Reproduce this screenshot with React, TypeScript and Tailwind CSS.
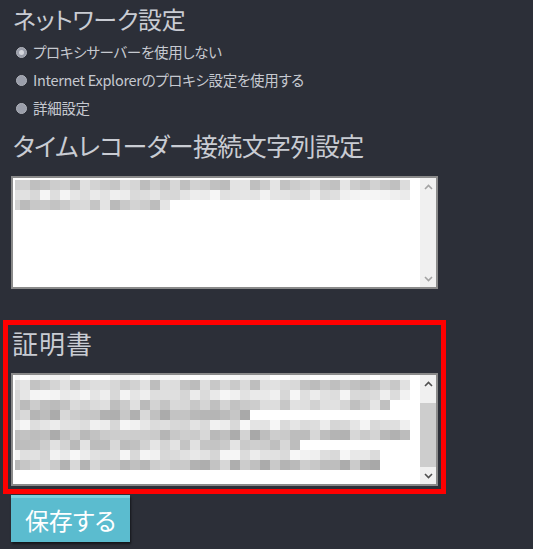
import React from "react";

type Row = { h: number; w: number; tone: "mid" | "light" | "dark" | "sparse" };

const firstRows: Row[] = [
  { h: 10, w: 400, tone: "mid" },
  { h: 10, w: 400, tone: "light" },
  { h: 10, w: 155, tone: "mid" },
];

const certRows: Row[] = [
  { h: 5, w: 395, tone: "sparse" },
  { h: 10, w: 395, tone: "mid" },
  { h: 10, w: 395, tone: "light" },
  { h: 10, w: 375, tone: "mid" },
  { h: 10, w: 240, tone: "dark" },
  { h: 10, w: 395, tone: "light" },
  { h: 10, w: 400, tone: "dark" },
  { h: 10, w: 285, tone: "mid" },
  { h: 10, w: 365, tone: "light" },
  { h: 10, w: 365, tone: "dark" },
];

function makeRandom(seed: number) {
  let s = seed;
  return () => {
    s = (s * 9301 + 49297) % 233280;
    return s / 233280;
  };
}

function shade(tone: Row["tone"], r: number) {
  if (tone === "sparse") return r > 0.55 ? 255 : 238 + Math.floor(r * 20);
  if (tone === "light") return 214 + Math.floor(r * 34);
  if (tone === "dark") return 168 + Math.floor(r * 50);
  return 186 + Math.floor(r * 44);
}

// blurred (mosaic) contents of a text box
function Mosaic({ rows, seed }: { rows: Row[]; seed: number }) {
  const rand = makeRandom(seed);
  return (
    <div className="flex flex-col">
      {rows.map((row, i) => {
        const cells: number[] = [5];
        let total = 5;
        while (total + 10 <= row.w) {
          cells.push(10);
          total += 10;
        }
        return (
          <div key={i} className="flex" style={{ height: row.h }}>
            {cells.map((cw, j) => {
              const g = shade(row.tone, rand());
              return (
                <div
                  key={j}
                  className="shrink-0"
                  style={{ width: cw, background: `rgb(${g},${g},${g})` }}
                />
              );
            })}
          </div>
        );
      })}
    </div>
  );
}

function Chevron({ up, dark }: { up?: boolean; dark?: boolean }) {
  return (
    <svg width="9" height="6" viewBox="0 0 9 6" className={up ? "" : "rotate-180"}>
      <path
        d="M1 5 L4.5 1.5 L8 5"
        fill="none"
        stroke={dark ? "#505050" : "#a3a3a3"}
        strokeWidth="1.6"
      />
    </svg>
  );
}

function TextBox({ rows, seed, thumb }: { rows: Row[]; seed: number; thumb?: boolean }) {
  return (
    <div className="flex h-[113px] w-[427px] border-2 border-[#8a8a8a] bg-white">
      <div
        className={
          thumb
            ? "min-w-0 flex-1 overflow-hidden pl-[2px] pt-0"
            : "min-w-0 flex-1 overflow-hidden pl-[2px] pt-[2px]"
        }
      >
        <Mosaic rows={rows} seed={seed} />
      </div>
      <div className="flex w-[16px] shrink-0 flex-col bg-[#f0f0f0]">
        <div className="flex h-[17px] items-center justify-center">
          <Chevron up dark={thumb} />
        </div>
        <div className="flex flex-1 flex-col justify-end">
          {thumb && <div className="h-[64px] bg-[#cdcdcd]" />}
        </div>
        <div className="flex h-[17px] items-center justify-center">
          <Chevron dark={thumb} />
        </div>
      </div>
    </div>
  );
}

function Radio({ label, checked }: { label: string; checked?: boolean }) {
  return (
    <div className="flex h-[28px] items-center">
      <span className="ml-[5px] flex h-[11px] w-[11px] items-center justify-center rounded-full border border-[#b0b3bb] bg-[#9a9eaa]">
        {checked && <span className="h-[5px] w-[5px] rounded-full bg-[#d4d6dc]" />}
      </span>
      <span className="ml-[6px] text-[14.5px] leading-[20px] tracking-[-0.3px] text-[#c6c9d0]">
        {label}
      </span>
    </div>
  );
}

export default function App() {
  return (
    <div
      className="min-h-screen bg-[#2c2f38] pl-[11px] pt-[4px] [font-feature-settings:'palt']"
      style={{ fontFamily: "'Noto Sans CJK JP', 'Noto Sans', sans-serif" }}
    >
      <h1 className="pl-[2px] text-[24px] leading-[30px] tracking-[-0.3px] text-[#c9ccd3]">
        ネットワーク設定
      </h1>

      <div className="mt-[4px] flex flex-col">
        <Radio label="プロキシサーバーを使用しない" checked />
        <Radio label="Internet Explorerのプロキシ設定を使用する" />
        <Radio label="詳細設定" />
      </div>

      <h2 className="mt-[6px] pl-[2px] text-[25px] leading-[34px] tracking-[-0.6px] text-[#c9ccd3]">
        タイムレコーダー接続文字列設定
      </h2>
      <div className="mt-[14px]">
        <TextBox rows={firstRows} seed={7} />
      </div>

      {/* highlighted certificate section */}
      <div className="ml-[-8px] mt-[31px] w-[443px] border-[5px] border-[#ff0000] px-[3px] pb-[3px] pt-[1px]">
        <h2 className="pl-[1px] text-[26px] leading-[34px] tracking-[1px] text-[#c9ccd3]">証明書</h2>
        <div className="mt-[13px]">
          <TextBox rows={certRows} seed={31} thumb />
        </div>
      </div>

      <button className="mt-[1px] h-[47px] w-[119px] border-t-[3px] border-[#7dcfdd] bg-[#5bbccf] text-[24px] text-white shadow-[1px_2px_2px_rgba(0,0,0,0.55)]">
        保存する
      </button>
    </div>
  );
}
